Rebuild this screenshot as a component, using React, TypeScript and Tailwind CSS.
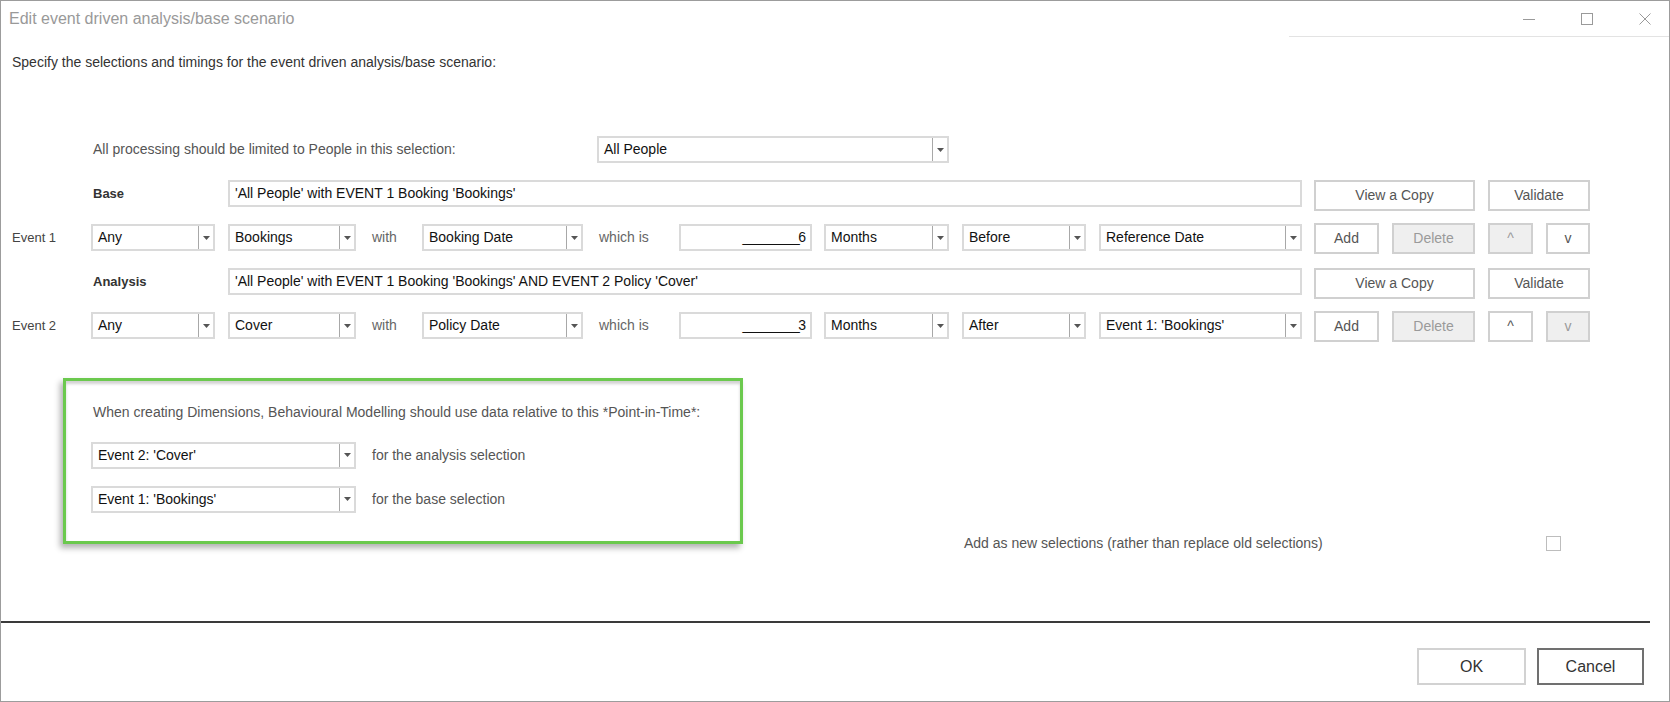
import React from "react";

// Edit event driven analysis/base scenario — Windows style dialog.
const FONT = "font-['Liberation_Sans',Arial,sans-serif]";

function Arrow() {
  return (
    <svg width="7" height="4" viewBox="0 0 7 4" className="fill-[#555]">
      <path d="M0 0h7L3.5 4z" />
    </svg>
  );
}

function Dropdown({ value, w }: { value: string; w: string }) {
  return (
    <div className={`flex h-[27px] shrink-0 border-2 border-[#dadada] bg-white ${w}`}>
      <span className="flex flex-1 items-center truncate pl-[5px] text-[14px] text-[#111]">{value}</span>
      <span className="flex w-[15px] items-center justify-center border-l border-[#a8a8a8]">
        <Arrow />
      </span>
    </div>
  );
}

function Btn({
  label,
  w,
  disabled = false,
  className = "",
}: {
  label: string;
  w: string;
  disabled?: boolean;
  className?: string;
}) {
  return (
    <div
      className={`flex h-[31px] shrink-0 items-center justify-center border-2 text-[14px] ${w} ${className} ${
        disabled ? "border-[#d0d0d0] bg-[#efefef] text-[#9a9a9a]" : "border-[#d0d0d0] bg-white text-[#555]"
      }`}
    >
      {label}
    </div>
  );
}

type EventRow = {
  label: string;
  any: string;
  kind: string;
  date: string;
  num: string;
  unit: string;
  when: string;
  ref: string;
  upDisabled: boolean;
  downDisabled: boolean;
};

const events: EventRow[] = [
  {
    label: "Event 1",
    any: "Any",
    kind: "Bookings",
    date: "Booking Date",
    num: "6",
    unit: "Months",
    when: "Before",
    ref: "Reference Date",
    upDisabled: true,
    downDisabled: false,
  },
  {
    label: "Event 2",
    any: "Any",
    kind: "Cover",
    date: "Policy Date",
    num: "3",
    unit: "Months",
    when: "After",
    ref: "Event 1: 'Bookings'",
    upDisabled: false,
    downDisabled: true,
  },
];

function SelectionRow({ label, text }: { label: string; text: string }) {
  return (
    <div className="flex h-[27px] items-start">
      <span className="ml-[92px] flex h-[27px] w-[135px] items-center text-[13px] font-bold text-[#333]">{label}</span>
      <div className="flex h-[27px] w-[1074px] items-center border-2 border-[#dadada] pl-[5px] text-[14px] text-[#111]">
        {text}
      </div>
      <Btn label="View a Copy" w="w-[161px]" className="ml-[12px]" />
      <Btn label="Validate" w="w-[102px]" className="ml-[13px]" />
    </div>
  );
}

function EventLine({ e }: { e: EventRow }) {
  return (
    <div className="flex h-[27px] items-start">
      <span className="ml-[11px] flex h-[27px] w-[79px] items-center text-[13px] text-[#444]">{e.label}</span>
      <Dropdown value={e.any} w="w-[124px]" />
      <div className="ml-[13px]">
        <Dropdown value={e.kind} w="w-[128px]" />
      </div>
      <span className="flex h-[27px] w-[66px] items-center pl-[16px] text-[14px] text-[#666]">with</span>
      <Dropdown value={e.date} w="w-[161px]" />
      <span className="flex h-[27px] w-[96px] items-center pl-[16px] text-[14px] text-[#666]">which is</span>
      <div className="flex h-[27px] w-[133px] items-center justify-end border-2 border-[#dadada] pr-[4px] text-[14px] text-[#111]">
        <span className="tracking-[-1.6px]">_________</span>
        <span>{e.num}</span>
      </div>
      <div className="ml-[12px]">
        <Dropdown value={e.unit} w="w-[125px]" />
      </div>
      <div className="ml-[13px]">
        <Dropdown value={e.when} w="w-[124px]" />
      </div>
      <div className="ml-[13px]">
        <Dropdown value={e.ref} w="w-[203px]" />
      </div>
      <Btn label="Add" w="w-[65px]" className="-mt-px ml-[12px]" />
      <Btn label="Delete" w="w-[83px]" disabled className="-mt-px ml-[13px]" />
      <Btn label="^" w="w-[45px]" disabled={e.upDisabled} className="-mt-px ml-[13px]" />
      <Btn label="v" w="w-[44px]" disabled={e.downDisabled} className="-mt-px ml-[13px]" />
    </div>
  );
}

export default function App() {
  return (
    <div className={`flex h-[702px] w-[1670px] flex-col border border-[#9c9c9c] bg-white ${FONT}`}>
      {/* title bar */}
      <div className="flex h-[36px] shrink-0">
        <div className="flex flex-1 items-center pl-[8px] text-[16px] text-[#999]">
          Edit event driven analysis/base scenario
        </div>
        <div className="flex w-[380px] items-center justify-end gap-[46px] border-b border-[#e3e3e3] pr-[18px]">
          <svg width="12" height="12" viewBox="0 0 12 12" className="stroke-[#9a9a9a]">
            <path d="M0 6.5h12" />
          </svg>
          <svg width="12" height="12" viewBox="0 0 12 12" className="fill-none stroke-[#9a9a9a]">
            <rect x="0.5" y="0.5" width="11" height="11" />
          </svg>
          <svg width="12" height="12" viewBox="0 0 12 12" className="stroke-[#9a9a9a]">
            <path d="M0.5 0.5l11 11M11.5 0.5l-11 11" />
          </svg>
        </div>
      </div>

      <p className="ml-[11px] mt-[17px] text-[14px] leading-[17px] text-[#333]">
        Specify the selections and timings for the event driven analysis/base scenario:
      </p>

      <div className="mt-[65px] flex flex-col gap-[17px]">
        <div className="flex h-[27px] items-center">
          <span className="ml-[92px] w-[504px] text-[14px] text-[#555]">
            All processing should be limited to People in this selection:
          </span>
          <Dropdown value="All People" w="w-[352px]" />
        </div>
        <SelectionRow label="Base" text="'All People' with EVENT 1 Booking 'Bookings'" />
        <EventLine e={events[0]} />
        <SelectionRow label="Analysis" text="'All People' with EVENT 1 Booking 'Bookings' AND EVENT 2 Policy 'Cover'" />
        <EventLine e={events[1]} />
      </div>

      <div className="mt-[39px] flex items-start">
        <div className="ml-[62px] h-[166px] w-[680px] border-[3px] border-[#6bc94e] pl-[25px] pt-[23px] shadow-[-3px_4px_6px_rgba(0,0,0,0.3),inset_0_3px_3px_rgba(0,0,0,0.18)]">
          <p className="ml-[2px] text-[14px] leading-[16px] text-[#555]">
            When creating Dimensions, Behavioural Modelling should use data relative to this *Point-in-Time*:
          </p>
          <div className="mt-[22px] flex h-[26px] items-center">
            <Dropdown value="Event 2: 'Cover'" w="w-[265px]" />
            <span className="ml-[16px] text-[14px] text-[#555]">for the analysis selection</span>
          </div>
          <div className="mt-[18px] flex h-[26px] items-center">
            <Dropdown value="Event 1: 'Bookings'" w="w-[265px]" />
            <span className="ml-[16px] text-[14px] text-[#555]">for the base selection</span>
          </div>
        </div>
        <div className="ml-[221px] mt-[157px] flex h-[16px] items-center">
          <span className="w-[582px] text-[14px] text-[#555]">Add as new selections (rather than replace old selections)</span>
          <span className="h-[15px] w-[15px] border border-[#bdbdbd] bg-white" />
        </div>
      </div>

      <div className="mt-auto">
        <div className="mr-[19px] border-t-2 border-[#3a3a3a]" />
        <div className="flex justify-end gap-[11px] pb-[16px] pr-[25px] pt-[25px]">
          <div className="flex h-[37px] w-[109px] items-center justify-center border-2 border-[#d2d2d2] text-[16px] text-[#333]">
            OK
          </div>
          <div className="flex h-[37px] w-[107px] items-center justify-center border-2 border-[#707070] text-[16px] text-[#333]">
            Cancel
          </div>
        </div>
      </div>
    </div>
  );
}
